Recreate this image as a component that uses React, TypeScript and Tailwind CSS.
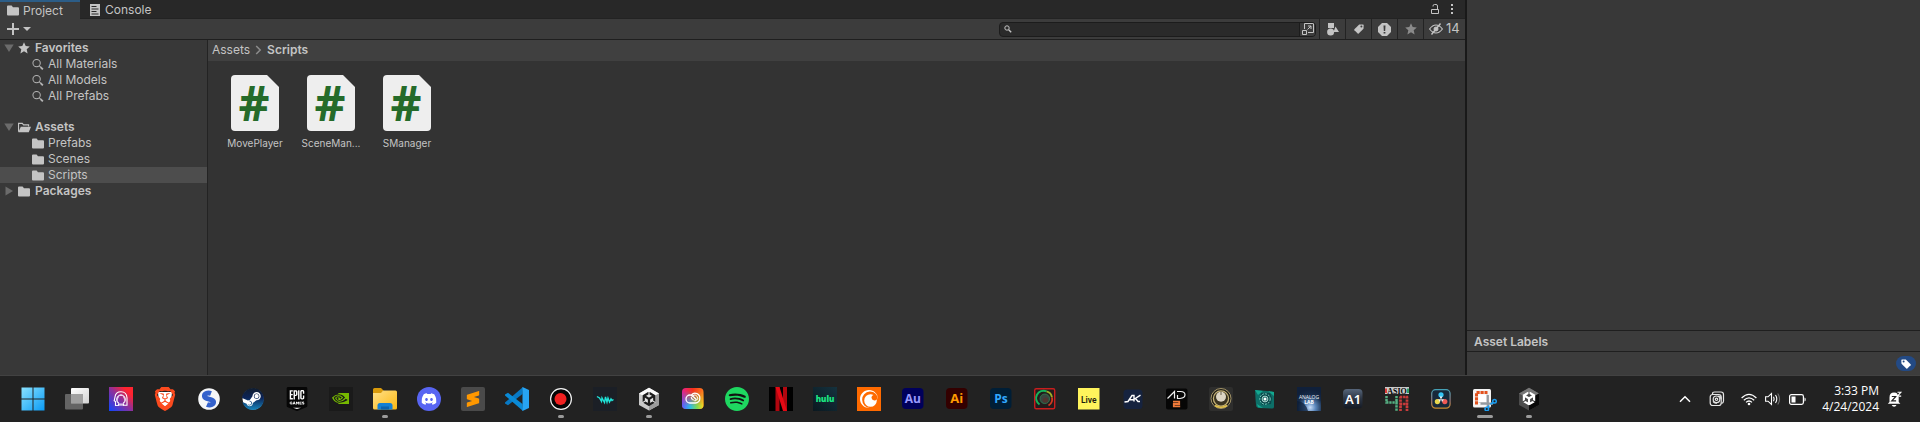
import type { ReactNode } from "react";
import {
  SiBrave,
  SiCrunchyroll,
  SiDiscord,
  SiEpicgames,
  SiNvidia,
  SiSpotify,
  SiSteam,
  SiSublimetext,
  SiUnity,
} from "react-icons/si";

/* ---------- editor icons ---------- */

function FolderIcon() {
  return (
    <svg width="12" height="11" viewBox="0 0 12 11" fill="#c4c4c4">
      <path d="M0 1.5Q0 .5 1 .5h3.6L6 2.2h5q1 0 1 1v6.2q0 1-1 1H1q-1 0-1-1z" />
    </svg>
  );
}

function OpenFolderIcon() {
  return (
    <svg width="14" height="11" viewBox="0 0 14 11">
      <path d="M.6 10V1.1h4L6 2.7h5.4v1.7" fill="none" stroke="#c4c4c4" strokeWidth="1.2" />
      <path d="M3 4.6h11L11.6 10.5H.4z" fill="#c4c4c4" />
    </svg>
  );
}

function MagnifierIcon() {
  return (
    <svg width="13" height="13" viewBox="0 0 13 13" fill="none" stroke="#b4b4b4">
      <circle cx="5" cy="5" r="4" strokeWidth="1.1" />
      <path d="M8 8l1.6 1.6" strokeWidth="1.1" />
      <path d="M9.3 9.3l2.5 2.5" strokeWidth="2" />
    </svg>
  );
}

function StarIcon({ className }: { className: string }) {
  return (
    <svg width="12" height="12" viewBox="0 0 12 12" fill="currentColor" className={className}>
      <path d="M6 .3l1.7 3.8 4.1.4-3.1 2.8.9 4.2L6 9.3l-3.6 2.2.9-4.2L.2 4.5l4.1-.4z" />
    </svg>
  );
}

function TagIcon({ hole }: { hole: string }) {
  return (
    <svg width="10" height="10" viewBox="0 0 10 10">
      <path d="M5.2.5L9 .4q.7 0 .7.7L9.500 4.800 4.700 9.600q-.5.4-1 0L.4 6.300q-.4-.5 0-1z" fill="currentColor" />
      <circle cx="7.400" cy="2.600" r="1" fill={hole} />
    </svg>
  );
}

/* ---------- project tree ---------- */

type Row = { label: string; icon: ReactNode; level: 0 | 1; open?: boolean; selected?: boolean };

const favorites: Row[] = [
  { label: "Favorites", icon: <StarIcon className="text-[#c4c4c4]" />, level: 0, open: true },
  { label: "All Materials", icon: <MagnifierIcon />, level: 1 },
  { label: "All Models", icon: <MagnifierIcon />, level: 1 },
  { label: "All Prefabs", icon: <MagnifierIcon />, level: 1 },
];

const folders: Row[] = [
  { label: "Assets", icon: <OpenFolderIcon />, level: 0, open: true },
  { label: "Prefabs", icon: <FolderIcon />, level: 1 },
  { label: "Scenes", icon: <FolderIcon />, level: 1 },
  { label: "Scripts", icon: <FolderIcon />, level: 1, selected: true },
  { label: "Packages", icon: <FolderIcon />, level: 0, open: false },
];

function TreeRow({ row }: { row: Row }) {
  const root = row.level === 0;
  return (
    <li>
      <button
        type="button"
        className={`flex h-4 w-full items-center gap-1 text-left text-xs leading-4 ${root ? "pl-1 font-semibold" : "pl-8"} ${row.selected ? "bg-[#4d4d4d]" : ""}`}
      >
        {root && (
          <svg width="10" height="10" viewBox="0 0 10 10" fill="#6b6b6b">
            {row.open ? <path d="M.3 1.500h9.400L5 9z" /> : <path d="M1.500.5L9 5 1.500 9.500z" />}
          </svg>
        )}
        <span className={`flex shrink-0 items-center ${root ? "w-[13px]" : "w-3"}`}>{row.icon}</span>
        <span>{row.label}</span>
      </button>
    </li>
  );
}

function ScriptFile({ name }: { name: string }) {
  return (
    <li>
      <button type="button" className="flex w-[76px] flex-col items-center gap-1">
        <svg width="48" height="56" viewBox="0 0 48 56" className="overflow-visible">
          <path d="M4 0h32l12 12v40q0 4-4 4H4q-4 0-4-4V4q0-4 4-4z" fill="#eeeeee" />
          <text x="23" y="46" textAnchor="middle" fontSize="48" fontWeight="700" fill="#256b2a" className="font-['Open_Sans',sans-serif]">
            #
          </text>
        </svg>
        <span className="text-[10px] leading-4">{name}</span>
      </button>
    </li>
  );
}

/* ---------- taskbar icons ---------- */

function Svg({ children }: { children: ReactNode }) {
  return (
    <svg width="24" height="24" viewBox="0 0 24 24" className="font-['Open_Sans',sans-serif]">
      {children}
    </svg>
  );
}

type App = { name: string; icon: ReactNode; running?: boolean; active?: boolean };

const apps: App[] = [
  {
    name: "Start",
    icon: (
      <Svg>
        <defs>
          <linearGradient id="win" x1="0" y1="0" x2="1" y2="1">
            <stop offset="0" stopColor="#8ae2ff" />
            <stop offset="1" stopColor="#0a9bf5" />
          </linearGradient>
        </defs>
        <path d="M.5.500h11v11h-11zM12.500.500h11v11h-11zM.5 12.500h11v11h-11zM12.500 12.500h11v11h-11z" fill="url(#win)" />
      </Svg>
    ),
  },
  {
    name: "Task View",
    icon: (
      <Svg>
        <defs>
          <linearGradient id="tv" x1="0" y1="0" x2="1" y2="1">
            <stop offset="0" stopColor="#ffffff" />
            <stop offset="1" stopColor="#d2d2d2" />
          </linearGradient>
        </defs>
        <rect x="6" y="1" width="18" height="15.500" rx="1" fill="url(#tv)" />
        <rect x="0" y="7" width="18" height="15.500" rx="1" fill="#737373" fillOpacity=".82" />
        <path d="M6 7h12v9.500H6z" fill="#a0a0a0" />
      </Svg>
    ),
  },
  {
    name: "Voice Tool",
    icon: (
      <Svg>
        <defs>
          <linearGradient id="vt" x1="0" y1="1" x2="1" y2="0">
            <stop offset="0" stopColor="#0b46ff" />
            <stop offset=".5" stopColor="#8f2f9a" />
            <stop offset=".8" stopColor="#ff2430" />
          </linearGradient>
        </defs>
        <path d="M0 0h24v24H0z" fill="url(#vt)" />
        <path d="M6.500 18.500v-4l-1.300-.8L6 10Q6.500 4.800 12 4.800t6 6v7.500h-3.500v-2.300a4.300 4.300 0 1 0-5 0v2.300z" fill="none" stroke="#fff" strokeWidth="1.100" />
        <path d="M9.500 17v-1.500A3 3 0 0 1 9 11q0-3.400 3-3.400t3 3.400a3 3 0 0 1-.5 4.500V17z" fill="none" stroke="#e4cdf2" strokeWidth="1" />
        <path d="M9 18h6" stroke="#fff" strokeWidth="1" />
      </Svg>
    ),
  },
  {
    name: "Brave",
    icon: (
      <Svg>
        <path d="M5 5h14l-1 10-6 6-6-6z" fill="#fff" />
        <SiBrave size={24} color="#fb4a1e" />
      </Svg>
    ),
  },
  {
    name: "Simplenote",
    icon: (
      <Svg>
        <circle cx="12" cy="12" r="10.800" fill="#f5f6f8" />
        <path d="M14 6.500C10.500 5.200 7 7 7.500 9.600c.6 3 8.400 2 9 5 .4 2.600-3 4.400-6.500 2.900" fill="none" stroke="#3361cc" strokeWidth="5" />
      </Svg>
    ),
  },
  {
    name: "Steam",
    icon: (
      <Svg>
        <defs>
          <linearGradient id="steam" x1="0" y1="0" x2="0" y2="1">
            <stop offset="0" stopColor="#111d2e" />
            <stop offset=".45" stopColor="#0c2458" />
            <stop offset="1" stopColor="#1786bd" />
          </linearGradient>
        </defs>
        <circle cx="12" cy="12" r="10.500" fill="#fff" />
        <svg x="1" y="1" width="22" height="22" viewBox="0 0 24 24">
          <SiSteam size={24} fill="url(#steam)" />
        </svg>
      </Svg>
    ),
  },
  {
    name: "Epic Games",
    icon: (
      <Svg>
        <path d="M4 3h16v17l-8 3-8-3z" fill="#fff" />
        <SiEpicgames size={24} color="#060606" />
      </Svg>
    ),
  },
  {
    name: "NVIDIA",
    icon: (
      <Svg>
        <path d="M0 0h24v24H0z" fill="#1a1a1a" />
        <svg x="3" y="3" width="17" height="17" viewBox="0 0 24 24">
          <SiNvidia size={24} color="#76b900" />
        </svg>
      </Svg>
    ),
  },
  {
    name: "File Explorer",
    running: true,
    icon: (
      <Svg>
        <defs>
          <linearGradient id="fe" x1="0" y1="0" x2="1" y2="1">
            <stop offset="0" stopColor="#ffe089" />
            <stop offset="1" stopColor="#fcb912" />
          </linearGradient>
        </defs>
        <path d="M0 2.500Q0 1 1.500 1H8l2.500 2.500L8 7H0z" fill="#d99a0b" />
        <path d="M0 6h8l2-2.500h12.500Q24 3.500 24 5v16q0 1.500-1.500 1.500h-21Q0 22.500 0 21z" fill="url(#fe)" />
        <path d="M4.500 22.500v-4Q4.500 16 7 16h10q2.500 0 2.500 2.500v4z" fill="#1580d4" />
        <path d="M8 19.500h8v3H8z" fill="#0e63ad" />
      </Svg>
    ),
  },
  {
    name: "Discord",
    icon: (
      <Svg>
        <circle cx="12" cy="12" r="12" fill="#5865f2" />
        <svg x="4.500" y="4.500" width="15" height="15" viewBox="0 0 24 24">
          <SiDiscord size={24} color="#fff" />
        </svg>
      </Svg>
    ),
  },
  {
    name: "Sublime Text",
    icon: (
      <Svg>
        <rect width="24" height="24" rx="2" fill="#4a4a4a" />
        <svg x="4" y="4" width="16" height="16" viewBox="0 0 24 24">
          <SiSublimetext size={24} color="#ff9800" />
        </svg>
      </Svg>
    ),
  },
  {
    name: "Visual Studio Code",
    icon: (
      <Svg>
        <path d="M18 0l-.5 7L3 18.300 0 16.500v-1z" fill="#0879c4" />
        <path d="M18 24l-.5-7L3 5.700 0 7.500v1z" fill="#0a8ad6" />
        <path d="M17.500 0L24 3v18l-6.500 3z" fill="#27a4f2" />
      </Svg>
    ),
  },
  {
    name: "Recorder",
    running: true,
    icon: (
      <Svg>
        <circle cx="12" cy="12" r="10.400" fill="#050505" stroke="#f4f4f4" strokeWidth="1.200" />
        <circle cx="11.500" cy="12" r="6" fill="#f02020" />
      </Svg>
    ),
  },
  {
    name: "Wave",
    icon: (
      <Svg>
        <path d="M0 0h24v24H0z" fill="#1b1f26" />
        <path d="M4 9.500l2.500 1.500 2 3.500.5-3.500 2.500 4.500 1-5.500 1.500 5 1-4 1.500 4 1.500-3 1 1.500 1.500-1" fill="none" stroke="#1fe3d8" strokeWidth="1.400" />
      </Svg>
    ),
  },
  {
    name: "Unity Hub",
    running: true,
    icon: (
      <Svg>
        <path d="M12 .800l10 5.700v11.500l-10 5.500-10-5.500V6.500z" fill="#c9c9c9" />
        <path d="M12 .800l10 5.700-10 5.500-10-5.500z" fill="#fafafa" />
        <path d="M22 6.500v11.500l-10 5.500V12z" fill="#9c9c9c" />
        <path d="M12 5l6.500 3.600v7L12 19.300l-6.500-3.700v-7z" fill="#e2e2e2" />
        <svg x="4.800" y="4.800" width="14.400" height="14.400" viewBox="0 0 24 24">
          <SiUnity size={24} color="#1d1d1d" />
        </svg>
      </Svg>
    ),
  },
  {
    name: "Creative Cloud",
    icon: (
      <Svg>
        <defs>
          <linearGradient id="cc1" x1="0" y1="0" x2="1" y2="0">
            <stop offset="0" stopColor="#e8218c" />
            <stop offset=".5" stopColor="#f5301c" />
            <stop offset="1" stopColor="#ff7a1e" />
          </linearGradient>
          <linearGradient id="cc2" x1="0" y1="0" x2="1" y2="0">
            <stop offset="0" stopColor="#5a5cff" />
            <stop offset=".4" stopColor="#2fc0e0" />
            <stop offset=".7" stopColor="#7ddb52" />
            <stop offset="1" stopColor="#ffd61e" />
          </linearGradient>
          <linearGradient id="ccm" x1="0" y1="0" x2="0" y2="1">
            <stop offset=".15" stopColor="#fff" stopOpacity="0" />
            <stop offset=".8" stopColor="#fff" />
          </linearGradient>
          <mask id="ccmask">
            <path d="M0 0h24v24H0z" fill="url(#ccm)" />
          </mask>
        </defs>
        <rect x="1" y="1" width="21.500" height="21" rx="4" fill="url(#cc1)" />
        <rect x="1" y="1" width="21.500" height="21" rx="4" fill="url(#cc2)" mask="url(#ccmask)" />
        <path d="M10.500 8A4.700 4.700 0 0 1 18.800 11.500a4.300 4.300 0 0 1-4.300 4.500H9A4 4 0 0 1 9 8q2 0 3.500 1.700l3 3" fill="none" stroke="#fff" strokeWidth="1.300" />
        <path d="M11.500 13.200A3 3 0 1 1 15 13.700h-1.500L9.800 10.700" fill="none" stroke="#fff" strokeWidth="1" />
      </Svg>
    ),
  },
  {
    name: "Spotify",
    icon: (
      <Svg>
        <circle cx="12" cy="12" r="11" fill="#121212" />
        <SiSpotify size={24} color="#1ed760" />
      </Svg>
    ),
  },
  {
    name: "Netflix",
    icon: (
      <Svg>
        <path d="M0 0h24v24H0z" fill="#000" />
        <path d="M6.500 0h4v24h-4zM14 0h4v24h-4z" fill="#b1060f" />
        <path d="M6.500 0h4L18 24h-4z" fill="#e50914" />
      </Svg>
    ),
  },
  {
    name: "Hulu",
    icon: (
      <Svg>
        <defs>
          <linearGradient id="hulu" x1="0" y1="1" x2="1" y2="0">
            <stop offset="0" stopColor="#0a1820" />
            <stop offset="1" stopColor="#15323e" />
          </linearGradient>
        </defs>
        <path d="M0 0h24v24H0z" fill="url(#hulu)" />
        <text x="12" y="15" textAnchor="middle" fontSize="8" fontWeight="800" fill="#1ce783">
          hulu
        </text>
      </Svg>
    ),
  },
  {
    name: "Crunchyroll",
    icon: (
      <Svg>
        <path d="M0 0h24v24H0z" fill="#ff6a00" />
        <svg x="3" y="3" width="18" height="18" viewBox="0 0 24 24">
          <SiCrunchyroll size={24} color="#fff" />
        </svg>
      </Svg>
    ),
  },
  {
    name: "Audition",
    icon: (
      <Svg>
        <rect x="1" y="1" width="21.500" height="21" rx="4" fill="#00005b" />
        <text x="11.800" y="15.500" textAnchor="middle" fontSize="12" fontWeight="700" fill="#9999ff">
          Au
        </text>
      </Svg>
    ),
  },
  {
    name: "Illustrator",
    icon: (
      <Svg>
        <rect x="1" y="1" width="21.500" height="21" rx="4" fill="#330000" />
        <text x="11.800" y="15.500" textAnchor="middle" fontSize="13" fontWeight="700" fill="#ff9a00">
          Ai
        </text>
      </Svg>
    ),
  },
  {
    name: "Photoshop",
    icon: (
      <Svg>
        <rect x="1" y="1" width="21.500" height="21" rx="4" fill="#001e36" />
        <text x="12" y="15.500" textAnchor="middle" fontSize="12" fontWeight="700" fill="#31a8ff">
          Ps
        </text>
      </Svg>
    ),
  },
  {
    name: "Amp",
    icon: (
      <Svg>
        <rect x="1.700" y="1.700" width="20" height="20" rx="1.500" fill="#221c1c" stroke="#c81e1e" strokeWidth="1.400" />
        <path d="M6.500 17.500a7.500 7.500 0 0 1 7-13.200" fill="none" stroke="#14b45a" strokeWidth="2" />
        <path d="M13.500 4.300a7.500 7.500 0 0 1 5.500 6" fill="none" stroke="#9cae28" strokeWidth="1.800" />
        <path d="M19 10.500a7.500 7.500 0 0 1-3.500 8" fill="none" stroke="#d03a20" strokeWidth="1.800" />
        <circle cx="11.800" cy="11.800" r="4.800" fill="#3a4440" stroke="#2f7d50" strokeWidth=".8" />
        <circle cx="12.500" cy="13" r="2.600" fill="#51352f" />
      </Svg>
    ),
  },
  {
    name: "Ableton Live",
    icon: (
      <Svg>
        <path d="M1 1h21.500v21.500H1z" fill="#fff45c" />
        <text x="11.800" y="15.500" textAnchor="middle" fontSize="8.500" fontWeight="600" fill="#1c1c10" className="font-['Roboto',sans-serif]">
          Live
        </text>
      </Svg>
    ),
  },
  {
    name: "AK",
    icon: (
      <Svg>
        <rect x="2.500" y="2.500" width="19" height="19.500" rx="3.500" fill="#16233f" />
        <path d="M3.500 15l3.500-.5 4-6h2v6M8.500 12.800h4M13.500 12L19.500 8.200M14.500 11.500l2.500 3h2" fill="none" stroke="#fff" strokeWidth="1.400" />
      </Svg>
    ),
  },
  {
    name: "Addictive Drums 2",
    icon: (
      <Svg>
        <rect x="1" y="1.500" width="21.500" height="21" rx="2" fill="#060606" />
        <path d="M2.500 11.500L9.500 4.500v7M12 4.500h3.500q4.500 0 4.500 3.200t-5 3.800h-2.500V8" fill="none" stroke="#efefef" strokeWidth="1.200" />
        <path d="M8 14.700h6.200v2.300H8.800v2.300h6.400" fill="none" stroke="#f07a3a" strokeWidth="1.800" />
      </Svg>
    ),
  },
  {
    name: "Knob",
    icon: (
      <Svg>
        <rect width="24" height="24" rx="2" fill="#2e2e2d" />
        <circle cx="12" cy="11.500" r="10" fill="#201d16" stroke="#a39468" strokeWidth="1" />
        <circle cx="12" cy="11.500" r="7.600" fill="#3a3320" stroke="#c4b176" strokeWidth="1.300" />
        <path d="M6 18.500q6 3.500 12 0" fill="none" stroke="#e4c34c" strokeWidth="1.700" />
        <circle cx="12" cy="9.800" r="5" fill="#ddd5c4" />
        <path d="M12 5v3" stroke="#6b6350" strokeWidth="1" />
      </Svg>
    ),
  },
  {
    name: "Radar",
    icon: (
      <Svg>
        <path d="M2 3l12 1 7 1v15q0 1.500-2 1.500L6 21q-3-.5-3-3l-.5-6z" fill="#0d6f68" />
        <path d="M2 3l8 1-5 4zM15 4l6 1v4zM4 17l6 4-5-.8z" fill="#14a890" />
        <path d="M8 6h9l2 5-1 6-9 1-2-5z" fill="#0a4a4c" />
        <circle cx="12" cy="12" r="5.200" fill="none" stroke="#7bd0c0" strokeWidth="1" strokeDasharray="2 1" />
        <circle cx="12" cy="12" r="2.900" fill="#1b6a65" stroke="#d6f2ec" strokeWidth=".8" />
        <circle cx="12" cy="12" r="1.500" fill="#fff" />
      </Svg>
    ),
  },
  {
    name: "Analog Lab",
    icon: (
      <Svg>
        <defs>
          <radialGradient id="al" cx=".55" cy=".85" r=".75">
            <stop offset="0" stopColor="#c8defa" />
            <stop offset=".3" stopColor="#5c88bd" />
            <stop offset=".7" stopColor="#152a48" />
            <stop offset="1" stopColor="#10203a" />
          </radialGradient>
        </defs>
        <path d="M0 0h24v24H0z" fill="url(#al)" />
        <path d="M0 14q8 0 11 10H0z" fill="#0c1b33" fillOpacity=".7" />
        <text x="12" y="12" textAnchor="middle" fontSize="5" fill="#f0f4fa">
          ANALOG
        </text>
        <text x="12" y="16.500" textAnchor="middle" fontSize="5" fontWeight="700" fill="#fff">
          LAB
        </text>
      </Svg>
    ),
  },
  {
    name: "A1",
    icon: (
      <Svg>
        <defs>
          <linearGradient id="a1" x1="0" y1="0" x2="0" y2="1">
            <stop offset="0" stopColor="#56657a" />
            <stop offset=".5" stopColor="#2c3543" />
            <stop offset="1" stopColor="#141a24" />
          </linearGradient>
        </defs>
        <rect x="2" y="2" width="19.500" height="19.500" rx="4" fill="url(#a1)" />
        <text x="12" y="16.500" textAnchor="middle" fontSize="13" fontWeight="600" fill="#fff" className="font-['Noto_Sans',sans-serif]">
          A1
        </text>
      </Svg>
    ),
  },
  {
    name: "ASIO4ALL",
    icon: (
      <Svg>
        <path d="M0 0h24v7H0z" fill="#c9c9c9" />
        <path d="M0 1.500h2v4.500H0z" fill="#d93a3a" />
        <path d="M22 1.500h2v4.500h-2z" fill="#2f9e62" />
        <text x="12" y="6.600" textAnchor="middle" fontSize="8" fontWeight="800" fill="#050505" className="font-['Liberation_Serif',serif]">
          ASIO
        </text>
        <path d="M1.500 9v6.500H13M11.500 9v15" fill="none" stroke="#56b184" strokeWidth="2.500" strokeDasharray="2.300 .8" />
        <path d="M15.500 24V9.500M22 24V9.500M15 10h8M15 17h8" fill="none" stroke="#c93c3c" strokeWidth="2.700" strokeDasharray="2.300 .8" />
      </Svg>
    ),
  },
  {
    name: "DaVinci Resolve",
    icon: (
      <Svg>
        <defs>
          <linearGradient id="dr" x1="0" y1="0" x2="0" y2="1">
            <stop offset="0" stopColor="#45a0b5" />
            <stop offset=".6" stopColor="#8c6f72" />
            <stop offset="1" stopColor="#c98a2d" />
          </linearGradient>
        </defs>
        <rect x="2.700" y="2.700" width="18.400" height="18.400" rx="4" fill="#18293a" stroke="url(#dr)" strokeWidth="1.300" />
        <circle cx="12" cy="7.800" r="2.600" fill="#36c5f4" />
        <circle cx="8.400" cy="14.600" r="2.600" fill="#e9d74d" />
        <circle cx="15.800" cy="14.600" r="2.600" fill="#f05a54" />
        <path d="M12 12.500L10.600 9.500h2.800zM12 12l-1 3-2-2.800zM12 12l1 3 2-2.800z" fill="#eef4f8" />
      </Svg>
    ),
  },
  {
    name: "Snipping Tool",
    active: true,
    icon: (
      <Svg>
        <rect x="0" y="2" width="18" height="18.500" rx="1.500" fill="#f4f4f4" />
        <path d="M3.500 17.500V5.500h11" fill="none" stroke="#e2511d" strokeWidth="3" strokeDasharray="3.200 .8" />
        <path d="M5.500 7.500h8.500v9H5.500z" fill="#fff" />
        <path d="M14 7v8.500H5.500" fill="none" stroke="#cfcfcf" strokeWidth="1" />
        <path d="M14.800 8v12M7.500 16.700H20" stroke="#949aa0" strokeWidth="2.200" />
        <circle cx="21.500" cy="14.300" r="1.800" fill="none" stroke="#1b9df0" strokeWidth="1.500" />
        <circle cx="13.800" cy="22" r="1.800" fill="none" stroke="#1b9df0" strokeWidth="1.500" />
        <path d="M20 15.500l-2.500 1.800M14.800 20.500l1.400-2" stroke="#1b9df0" strokeWidth="1.700" />
      </Svg>
    ),
  },
  {
    name: "Unity Editor",
    running: true,
    icon: (
      <Svg>
        <path d="M12 .800l10 5.700v11.500l-10 5.500-10-5.500V6.500z" fill="#4c4c4c" />
        <path d="M12 .800l10 5.700-10 5.500-10-5.500z" fill="#777777" />
        <path d="M22 6.500v11.500l-10 5.500V12z" fill="#080808" />
        <svg x="5" y="4.500" width="14" height="14" viewBox="0 0 24 24">
          <path d="M12 1l9.500 5.300v11.400L12 23l-9.500-5.300V6.300z" fill="#4a4a4a" />
          <SiUnity size={24} color="#fff" />
        </svg>
      </Svg>
    ),
  },
];

function Taskbar() {
  return (
    <footer className="flex h-[47px] shrink-0 items-stretch justify-between border-t border-[#424242] bg-[#222222] pr-[17px] pl-[11px] text-white">
      <nav aria-label="Taskbar" className="flex">
        {apps.map((app) => (
          <button key={app.name} type="button" aria-label={app.name} className="relative flex w-11 items-center justify-center">
            {app.icon}
            {(app.running || app.active) && (
              <span className={`absolute bottom-1 h-[3px] rounded-full bg-[#9b9b9b] ${app.active ? "w-4" : "w-1.5"}`} />
            )}
          </button>
        ))}
      </nav>
      <div className="flex items-center font-['Open_Sans',sans-serif]">
        <button type="button" aria-label="Show hidden icons" className="mr-[18px]">
          <svg width="12" height="8" viewBox="0 0 12 8" fill="none" stroke="#fff" strokeWidth="1.500">
            <path d="M1 6.700l5-5 5 5" />
          </svg>
        </button>
        <button type="button" aria-label="Color utility" className="mr-4">
          <svg width="16" height="16" viewBox="0 0 16 16" fill="none" stroke="#e6e6e6" strokeWidth="1.200">
            <path d="M3.500 3.500V3q0-2 2-2H12q2.500 0 2.500 2.500V10q0 2-2 2.500" />
            <rect x="1.200" y="3.500" width="11" height="11" rx="2.500" />
            <circle cx="7.500" cy="8.300" r="3.300" />
            <circle cx="7.500" cy="8.300" r="1.200" />
            <path d="M9 5.300q3-.8 3 3M4 10.500q1.500 2 4 1.500" />
          </svg>
        </button>
        <button type="button" aria-label="Network, volume and battery" className="flex items-center gap-2">
          <svg width="16" height="13" viewBox="0 0 16 13" fill="none" stroke="#fff" strokeWidth="1.200">
            <path d="M.6 5Q8-2.300 15.400 5M2.800 7.200q5.200-4.800 10.400 0M5 9.400q3-2.800 6 0" />
            <circle cx="8" cy="11" r="1.300" fill="#fff" stroke="none" />
          </svg>
          <svg width="16" height="14" viewBox="0 0 16 14" fill="none" stroke="#fff" strokeWidth="1.100">
            <path d="M.600 4.800H3L6.500 1.500v11L3 9.200H.6z" />
            <path d="M8.500 4.800q1.300 2.200 0 4.400M10.500 3q2.600 4 0 8" />
            <path d="M12.700 1.500q3.800 5.500 0 11" stroke="#6d6d6d" />
          </svg>
          <svg width="17" height="11" viewBox="0 0 17 11">
            <rect x=".6" y=".6" width="13.800" height="9.800" rx="1.800" fill="none" stroke="#fff" strokeWidth="1.200" />
            <path d="M2.500 2.500H6.500v6h-4zM15.500 3.500q1.200 0 1.200 2t-1.200 2z" fill="#fff" />
          </svg>
        </button>
        <button type="button" className="ml-4 text-right text-xs leading-4">
          <span className="block">3:33 PM</span>
          <span className="block">4/24/2024</span>
        </button>
        <button type="button" aria-label="Notifications" className="ml-2">
          <svg width="16" height="16" viewBox="0 0 16 16">
            <path d="M2.500 11V6.500Q2.500 1.500 7 1.500q4.700 0 4.700 5V11l1.700 1.700H.8z" fill="#fff" />
            <path d="M4.700 14h4.800q-.7 1.800-2.400 1.800T4.700 14z" fill="#fff" />
            <path d="M4.800 5.500h4L4.800 9.800h4.300" fill="none" stroke="#222" strokeWidth="1.200" />
            <path d="M9.500 0h6v6h-4z" fill="#222" />
            <path d="M10.500 1.200h3.400l-3.400 3.900h3.700" fill="none" stroke="#fff" strokeWidth="1.100" />
          </svg>
        </button>
      </div>
    </footer>
  );
}

/* ---------- editor panels ---------- */

function TabBar() {
  return (
    <header className="flex h-[19px] shrink-0 items-stretch bg-[#282828]">
      <div role="tablist" className="flex text-xs">
        <button type="button" role="tab" aria-selected="true" className="flex w-20 items-center gap-1 border-t-2 border-[#2c5d87] bg-[#3c3c3c] pl-[7px]">
          <FolderIcon />
          <span className="leading-4">Project</span>
        </button>
        <button type="button" role="tab" aria-selected="false" className="flex items-center gap-[5px] border-b border-[#232323] pt-0.5 pl-2.5">
          <svg width="10" height="12" viewBox="0 0 10 12">
            <path d="M0 0h10v12H0z" fill="#c4c4c4" />
            <path d="M1.500 2.500h5M1.500 5h7M1.500 7.500h5M1.500 10h7" stroke="#282828" />
          </svg>
          <span className="leading-4">Console</span>
        </button>
      </div>
      <div className="flex flex-1 items-center justify-end gap-3 border-b border-[#232323] pr-[11px]">
        <button type="button" aria-label="Lock">
          <svg width="8" height="10" viewBox="0 0 8 10" fill="none" stroke="#c4c4c4">
            <path d="M.500 5.500h7v4h-7zM6.500 5.500V2q0-1.500-1.500-1.500H3.500Q2 .5 2 2v.5" />
          </svg>
        </button>
        <button type="button" aria-label="More options">
          <svg width="3" height="10" viewBox="0 0 3 10" fill="#c4c4c4">
            <path d="M0 0h2v2H0zM0 4h2v2H0zM0 8h2v2H0z" />
          </svg>
        </button>
      </div>
    </header>
  );
}

function Toolbar() {
  const cell = "flex w-[26px] items-center justify-center border-l border-[#232323]";
  return (
    <div className="flex h-[21px] shrink-0 items-stretch justify-between border-b border-[#1f1f1f] bg-[#3c3c3c]">
      <button type="button" aria-label="Create" className="flex items-center gap-1 pl-[7px]">
        <svg width="12" height="12" viewBox="0 0 12 12" fill="#c4c4c4">
          <path d="M5 0h2v5h5v2H7v5H5V7H0V5h5z" />
        </svg>
        <svg width="8" height="4" viewBox="0 0 8 4" fill="#c4c4c4">
          <path d="M0 0h8L4 4z" />
        </svg>
      </button>
      <div className="flex items-stretch">
        <div className="mr-[3px] flex items-center">
          <div className="flex h-[15px] w-[317px] items-stretch overflow-hidden rounded border border-[#1c1c1c] bg-[#2a2a2a]">
            <label htmlFor="search" className="flex items-center pl-1">
              <svg width="8" height="8" viewBox="0 0 8 8" fill="none" stroke="#c4c4c4">
                <circle cx="3" cy="3" r="2.200" strokeWidth="1" />
                <path d="M4.700 4.700l2.500 2.500" strokeWidth="1.400" />
              </svg>
            </label>
            <input id="search" type="text" aria-label="Search" className="min-w-0 flex-1 bg-transparent px-1 text-xs outline-none" />
            <button type="button" aria-label="Open in Search" className="flex w-4 items-center justify-center border-l border-[#1c1c1c] bg-[#3c3c3c]">
              <svg width="12" height="12" viewBox="0 0 12 12" fill="none" stroke="#c4c4c4">
                <path d="M2.500 6V.500h9v9H6M.500 7.500h4v4h-4zM5.500 6.500l3.500-3.500M6 3h3v3" />
              </svg>
            </button>
          </div>
        </div>
        <button type="button" aria-label="Search by type" className={cell}>
          <svg width="12" height="13" viewBox="0 0 12 13" fill="#c4c4c4">
            <path d="M1 0h6v5H1zM8.500 3.500L12 9H6.500z" />
            <circle cx="3.600" cy="9" r="3.500" />
          </svg>
        </button>
        <button type="button" aria-label="Search by label" className={`${cell} text-[#c4c4c4]`}>
          <TagIcon hole="#3c3c3c" />
        </button>
        <button type="button" aria-label="Search by import log" className={cell}>
          <svg width="13" height="13" viewBox="0 0 13 13">
            <path d="M4 0h5l4 4v5l-4 4H4L0 9V4z" fill="#c4c4c4" />
            <path d="M5.500 2.500h2L7.200 8H5.800zM5.600 9h1.800v1.600H5.600z" fill="#3c3c3c" />
          </svg>
        </button>
        <button type="button" aria-label="Save search" className={cell}>
          <StarIcon className="text-[#8a8a8a]" />
        </button>
        <button type="button" aria-label="Hidden packages" className="flex w-[42px] items-center gap-[3px] border-l border-[#232323] pl-[5px] text-[13px]">
          <svg width="14" height="12" viewBox="0 0 14 12" fill="none" stroke="#c4c4c4">
            <path d="M.6 6Q3.500 2 7 2t6.400 4Q10.500 10 7 10T.6 6z" strokeWidth="1.200" />
            <circle cx="7" cy="6" r="2" fill="#c4c4c4" />
            <path d="M2.500 11.500l9-11" strokeWidth="1.500" />
          </svg>
          14
        </button>
      </div>
    </div>
  );
}

export default function App() {
  return (
    <div className="flex min-h-screen flex-col bg-[#383838] font-['Inter',sans-serif] text-[#c4c4c4]">
      <div className="flex flex-1">
        <section aria-label="Project" className="flex min-w-0 flex-1 flex-col border-r-2 border-[#191919]">
          <TabBar />
          <Toolbar />
          <div className="flex flex-1">
            <nav aria-label="Folders" className="flex w-52 shrink-0 flex-col gap-[15px] border-r border-[#232323]">
              <ul>
                {favorites.map((row) => (
                  <TreeRow key={row.label} row={row} />
                ))}
              </ul>
              <ul>
                {folders.map((row) => (
                  <TreeRow key={row.label} row={row} />
                ))}
              </ul>
            </nav>
            <main className="min-w-0 flex-1 bg-[#333333]">
              <div className="flex h-[21px] items-center gap-[5px] bg-[#404040] pb-0.5 pl-1 text-xs">
                <a href="#assets">Assets</a>
                <svg width="7" height="10" viewBox="0 0 7 10" fill="none" stroke="#8c8c8c" strokeWidth="1.500">
                  <path d="M1.200 1l4 4-4 4" />
                </svg>
                <a href="#scripts" className="font-semibold">
                  Scripts
                </a>
              </div>
              <ul className="flex pt-3.5 pl-[9px]">
                <ScriptFile name="MovePlayer" />
                <ScriptFile name="SceneMan..." />
                <ScriptFile name="SManager" />
              </ul>
            </main>
          </div>
        </section>
        <aside aria-label="Inspector" className="flex w-[453px] shrink-0 flex-col">
          <div className="flex-1" />
          <h2 className="flex h-[22px] items-center border-y border-[#1f1f1f] bg-[#3c3c3c] pt-0.5 pl-[7px] text-xs font-semibold">Asset Labels</h2>
          <div className="flex h-[23px] items-center justify-end bg-[#3c3c3c] pr-1">
            <button type="button" aria-label="Edit labels" className="flex h-[15px] w-5 items-center justify-center rounded-full bg-[#234a85] text-white">
              <span className="-scale-x-100">
                <TagIcon hole="#234a85" />
              </span>
            </button>
          </div>
        </aside>
      </div>
      <Taskbar />
    </div>
  );
}
